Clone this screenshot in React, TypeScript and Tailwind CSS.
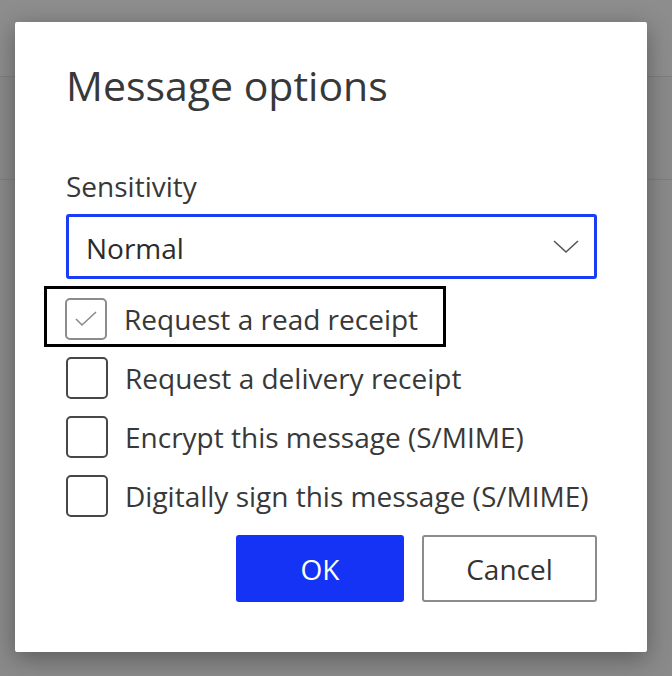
import React, { useState } from 'react';

const rows = [
  'Request a delivery receipt',
  'Encrypt this message (S/MIME)',
  'Digitally sign this message (S/MIME)',
];

const Box = ({ checked, light }: { checked?: boolean; light?: boolean }) => (
  <span
    className={`flex h-[42px] w-[42px] shrink-0 items-center justify-center rounded-[5px] border-2 bg-white ${
      light ? 'border-[#8c8c8c]' : 'border-[#474747]'
    }`}
  >
    {checked && (
      <svg width="24" height="18" viewBox="0 0 24 18" fill="none">
        <polyline points="2,9 8,15 22,2" stroke="#8a8a8a" strokeWidth="1.6" />
      </svg>
    )}
  </span>
);

export default function App() {
  const [readReceipt, setReadReceipt] = useState(true);

  return (
    <div
      className="relative h-[676px] w-[672px] overflow-hidden bg-[#8a8a8a]"
      style={{ fontFamily: '"Open Sans", "Noto Sans", sans-serif' }}
    >
      {/* page behind the modal */}
      <div className="h-[77px] border-b border-[#7f7f7f] bg-[#8d8d8d]" />
      <div className="h-[103px] border-b border-[#7f7f7f]" />

      {/* modal */}
      <div className="absolute left-[15px] top-[22px] flex h-[630px] w-[632px] flex-col rounded-[2px] bg-white pl-[51px] pr-[50px] shadow-[0_6px_24px_rgba(0,0,0,0.35)]">
        <h1 className="mt-[39px] text-[41px] leading-[48px] text-[#383838]">Message options</h1>

        <label className="mt-[61px] text-[28px] leading-[32px] text-[#383838]">Sensitivity</label>
        <button className="mt-[12px] flex h-[65px] w-full items-center justify-between rounded-[3px] border-[3px] border-[#1a3cf5] pl-[17px] pr-[14px] text-left">
          <span className="pt-[2px] text-[28px] text-[#2b2b2b]">Normal</span>
          <svg width="28" height="16" viewBox="0 0 28 16" fill="none">
            <polyline points="2,2 14,13 26,2" stroke="#555" strokeWidth="1.6" />
          </svg>
        </button>

        <div className="-ml-[22px] mt-[7px] flex h-[61px] w-[402px] items-start border-[3px] border-black pl-[18px] pt-[9px]">
          <label className="flex cursor-pointer items-center gap-[17px]" onClick={() => setReadReceipt(!readReceipt)}>
            <Box checked={readReceipt} light />
            <span className="text-[28px] text-[#383838]">Request a read receipt</span>
          </label>
        </div>

        <div className="mt-[10px] flex flex-col gap-[17px]">
          {rows.map((r) => (
            <label key={r} className="flex cursor-pointer items-center gap-[17px]">
              <Box />
              <span className="text-[28px] text-[#383838]">{r}</span>
            </label>
          ))}
        </div>

        <div className="mt-[18px] flex justify-end gap-[18px]">
          <button className="h-[67px] w-[168px] rounded-[3px] bg-[#1433f5] text-[28px] font-medium text-white">
            OK
          </button>
          <button className="h-[67px] w-[175px] rounded-[3px] border-2 border-[#8c8c8c] bg-white text-[28px] text-[#333]">
            Cancel
          </button>
        </div>
      </div>
    </div>
  );
}
